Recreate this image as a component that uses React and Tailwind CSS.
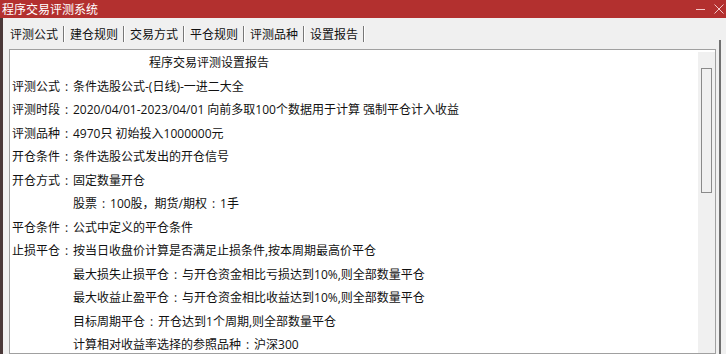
import React from "react";

const tabs = ["评测公式", "建仓规则", "交易方式", "平仓规则", "评测品种", "设置报告"];

const lines = [
  { label: "评测公式", text: "条件选股公式-(日线)-一进二大全" },
  { label: "评测时段", text: "2020/04/01-2023/04/01 向前多取100个数据用于计算 强制平仓计入收益" },
  { label: "评测品种", text: "4970只 初始投入1000000元" },
  { label: "开仓条件", text: "条件选股公式发出的开仓信号" },
  { label: "开仓方式", text: "固定数量开仓" },
  { indent: true, text: "股票：100股，期货/期权：1手" },
  { label: "平仓条件", text: "公式中定义的平仓条件" },
  { label: "止损平仓", text: "按当日收盘价计算是否满足止损条件,按本周期最高价平仓" },
  { indent: true, text: "最大损失止损平仓：与开仓资金相比亏损达到10%,则全部数量平仓" },
  { indent: true, text: "最大收益止盈平仓：与开仓资金相比收益达到10%,则全部数量平仓" },
  { indent: true, text: "目标周期平仓：开仓达到1个周期,则全部数量平仓" },
  { indent: true, text: "计算相对收益率选择的参照品种：沪深300" },
];

// full-width colon drawn centred, like the original font does
function Colon() {
  return <span className="inline-block w-[13px] text-center">:</span>;
}

function withColons(text) {
  const parts = text.split("：");
  return parts.map((p, i) => (
    <React.Fragment key={i}>
      {i > 0 && <Colon />}
      {p}
    </React.Fragment>
  ));
}

export default function App() {
  return (
    <div
      className="w-[726px] h-[354px] overflow-hidden flex flex-col bg-[#f0f0f0] text-[#111]"
      style={{ fontFamily: '"Noto Sans CJK SC", "Liberation Sans", sans-serif' }}
    >
      {/* title bar */}
      <div className="h-[18px] shrink-0 bg-[#b3302f] flex items-center justify-between pl-[2px] pr-[2px]">
        <span className="text-white text-[12px] leading-none">程序交易评测系统</span>
        <div className="flex items-center gap-[9px] text-[#f3c7c7]">
          <svg width="9" height="9" viewBox="0 0 9 9">
            <path d="M0 4.5 H9" stroke="currentColor" strokeWidth="1" />
          </svg>
          <svg width="10" height="10" viewBox="0 0 10 10">
            <path d="M0.5 0.5 L9.5 9.5 M9.5 0.5 L0.5 9.5" stroke="currentColor" strokeWidth="1" />
          </svg>
        </div>
      </div>

      <div className="flex-1 flex border-l-[3px] border-[#4a3838] min-h-0">
        <div className="flex-1 flex flex-col pl-[6px] min-w-0">
          {/* tabs */}
          <div className="h-[31px] shrink-0 flex items-center pl-[1px]">
            {tabs.map((t, i) => (
              <div key={t} className="h-[20px] flex items-center">
                <span className="text-[12px] leading-none w-[48px]">{t}</span>
                <span className="w-[2px] h-[16px] ml-[5px] mr-[5px] border-l border-[#777] border-r border-r-white" />
              </div>
            ))}
          </div>

          {/* report box */}
          <div className="flex-1 flex border border-[#a0a0a0] bg-white min-h-0">
            <div
              className="flex-1 text-[12px] leading-[23.5px] pt-[1px] pl-[2px] whitespace-nowrap overflow-hidden"
              style={{ fontFamily: '"Open Sans", "Noto Sans CJK SC", sans-serif' }}
            >
              <div className="pl-[137px]">程序交易评测设置报告</div>
              {lines.map((l, i) => (
                <div key={i} className="flex">
                  {l.indent ? (
                    <span className="w-[61px] shrink-0" />
                  ) : (
                    <span className="w-[61px] shrink-0">
                      {l.label}
                      <Colon />
                    </span>
                  )}
                  <span>{withColons(l.text)}</span>
                </div>
              ))}
            </div>
            {/* scrollbar */}
            <div className="w-[17px] shrink-0 mt-[2px] bg-[#f0f0f0] flex flex-col items-center">
              <div className="h-[16px]" />
              <div className="w-[11px] h-[125px] border border-[#8a8a8a] bg-[#f0f0f0]" />
            </div>
          </div>
        </div>
        {/* right frame */}
        <div className="w-[10px] shrink-0 flex pt-[22px] pl-[3px]">
          <div className="w-[2px] h-full bg-[#707070]" />
        </div>
      </div>
    </div>
  );
}
